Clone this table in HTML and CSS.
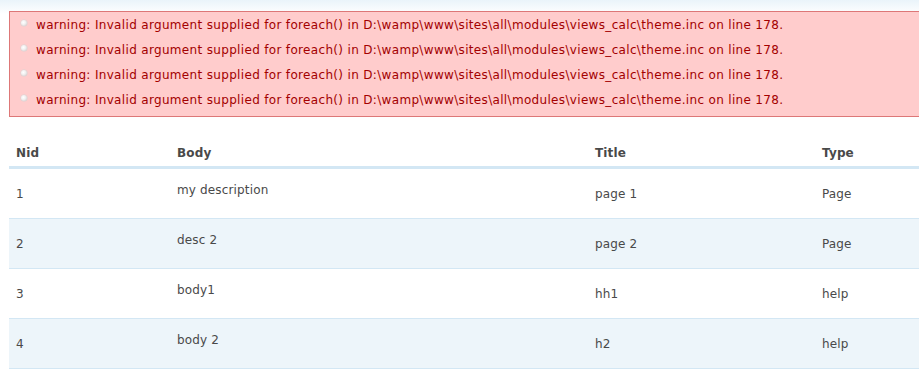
FILE: index.html
```html
<!DOCTYPE html>
<html>
<head>
<meta charset="utf-8">
<link rel="stylesheet" href="styles.css">
</head>
<body>
<div class="page">
  <div class="messages error">
    <ul>
      <li>warning: Invalid argument supplied for foreach() in D:\wamp\www\sites\all\modules\views_calc\theme.inc on line 178.</li>
      <li>warning: Invalid argument supplied for foreach() in D:\wamp\www\sites\all\modules\views_calc\theme.inc on line 178.</li>
      <li>warning: Invalid argument supplied for foreach() in D:\wamp\www\sites\all\modules\views_calc\theme.inc on line 178.</li>
      <li>warning: Invalid argument supplied for foreach() in D:\wamp\www\sites\all\modules\views_calc\theme.inc on line 178.</li>
    </ul>
  </div>
  <table class="views-table">
    <thead>
      <tr><th class="c-nid">Nid</th><th class="c-body">Body</th><th class="c-title">Title</th><th class="c-type">Type</th></tr>
    </thead>
    <tbody>
      <tr class="odd"><td>1</td><td class="body"><p>my description</p></td><td>page 1</td><td>Page</td></tr>
      <tr class="even"><td>2</td><td class="body"><p>desc 2</p></td><td>page 2</td><td>Page</td></tr>
      <tr class="odd"><td>3</td><td class="body"><p>body1</p></td><td>hh1</td><td>help</td></tr>
      <tr class="even"><td>4</td><td class="body"><p>body 2</p></td><td>h2</td><td>help</td></tr>
    </tbody>
  </table>
</div>
</body>
</html>
```

FILE: styles.css
```css
html, body {
  margin: 0;
  padding: 0;
}
body {
  width: 919px;
  height: 389px;
  overflow: hidden;
  background: linear-gradient(to bottom, #eaf4fa 0px, #ffffff 14px);
  font-family: "DejaVu Sans", Verdana, sans-serif;
  font-size: 12px;
  color: #494949;
}
.page {
  padding: 11px 0 0 9px;
}
.messages {
  width: 940px;
  box-sizing: border-box;
  border: 1px solid #dd7777;
  background: #ffcccc;
  color: #a30000;
  padding: 1px 0 3px 0;
  letter-spacing: 0.33px;
}
.messages ul {
  margin: 0;
  padding: 0 0 0 26px;
  list-style: none;
}
.messages li {
  position: relative;
  line-height: 25px;
  height: 25px;
  white-space: nowrap;
}
.messages li::before {
  content: "";
  position: absolute;
  left: -15px;
  top: 7px;
  width: 6px;
  height: 6px;
  border-radius: 50%;
  background: radial-gradient(circle at 40% 40%, #ffffff 0%, #f2f2f2 40%, #c8c8c8 100%);
  box-shadow: 0 0 0 0.5px #d6d6d6;
}
.views-table {
  margin-top: 24px;
  width: 940px;
  border-collapse: collapse;
  letter-spacing: 0.15px;
}
.views-table th {
  text-align: left;
  font-weight: bold;
  height: 21px;
  padding: 4px 7px 0 7px;
  vertical-align: top;
  line-height: 16px;
  border-bottom: 3px solid #d3e7f4;
}
.c-nid { width: 147px; }
.c-body { width: 404px; }
.c-title { width: 213px; }
.views-table td {
  padding: 1px 7px 0 7px;
  height: 48px;
  vertical-align: middle;
  border-bottom: 1px solid #d3e7f4;
  line-height: 16px;
}
.views-table tr.even td {
  background: #edf5fa;
}
.views-table td.body p {
  margin: 0 0 8px 0;
}
```
